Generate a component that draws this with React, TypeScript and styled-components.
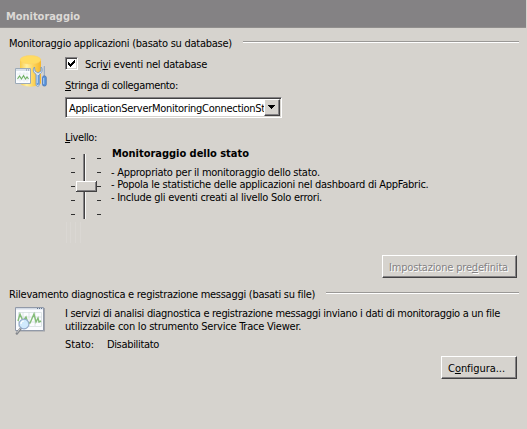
import React from 'react';
import styled, { createGlobalStyle, css } from 'styled-components';

const face = '#d6d3ce';
const shadow = '#848284';

const GlobalStyle = createGlobalStyle`
  html, body { margin: 0; padding: 0; background: ${face}; overflow: hidden; }
`;

const Panel = styled.main`
  box-sizing: border-box;
  width: 527px;
  height: 429px;
  background: ${face};
  color: #000;
  font: 11px/13px 'DejaVu Sans Condensed', 'DejaVu Sans', sans-serif;
  white-space: nowrap;
`;

const TitleBar = styled.header`
  box-sizing: border-box;
  width: 526px;
  height: 28px;
  padding: 10px 0 0 6px;
  background: ${shadow};
  border-bottom: 1px solid #918f8e;
  color: #dcd9d6;
`;

const Label = styled.span<{ $track?: number; $bold?: boolean }>`
  display: block;
  height: 13px;
  letter-spacing: ${p => p.$track ?? -0.26}px;
  font-weight: ${p => (p.$bold ? 700 : 400)};
`;

const Key = styled.span`
  text-decoration: underline;
  text-decoration-thickness: 1px;
  text-underline-offset: 1px;
  text-decoration-skip-ink: none;
`;

const Group = styled.section<{ $height: number }>`
  box-sizing: border-box;
  height: ${p => p.$height}px;
  padding: 9px 8px 0 9px;
`;

const Legend = styled.div<{ $gap: number }>`
  display: flex;
  gap: ${p => p.$gap}px;
  height: 13px;
`;

const Rule = styled.hr`
  flex: 1;
  height: 1px;
  margin: 4px 0 0;
  border: 0;
  background: #9a9896;
  border-bottom: 1px solid #fff;
`;

const Body = styled.div<{ $top: number }>`
  display: grid;
  grid-template-columns: 50px 1fr;
  padding: ${p => p.$top}px 0 0 6px;
`;

const Content = styled.div<{ $top: number }>`
  padding-top: ${p => p.$top}px;
`;

const CheckRow = styled.label`
  display: flex;
  gap: 7px;
  height: 22px;
`;

const CheckBox = styled.span`
  box-sizing: border-box;
  width: 13px;
  height: 13px;
  background: #fff;
  border: 1px solid;
  border-color: ${shadow} #fff #fff ${shadow};
  box-shadow: inset 1px 1px #424142, inset -1px -1px ${face};
  svg { display: block; }
`;

const CheckText = styled.span`
  padding-top: 1px;
`;

const Combo = styled.div`
  box-sizing: border-box;
  display: flex;
  width: 217px;
  height: 21px;
  margin-top: 5px;
  border: 1px solid;
  border-color: ${shadow} #fff #fff ${shadow};
  background: #fff;
  box-shadow: inset 1px 1px #424142, inset -1px -1px ${face};
`;

const ComboValue = styled.div`
  flex: 1;
  min-width: 0;
  overflow: hidden;
  padding: 4px 0 0 3px;
`;

const raised = css`
  border: 1px solid;
  border-color: #fff #424142 #424142 #fff;
  box-shadow: inset -1px -1px ${shadow};
  background: ${face};
`;

const Drop = styled.div`
  box-sizing: border-box;
  ${raised}
  width: 16px;
  height: 17px;
  margin: 1px 1px 0 0;
  svg { display: block; margin: 5px 0 0 3px; }
`;

const LevelRow = styled.div`
  display: flex;
  height: 101px;
  padding-top: 3px;
`;

const LevelSlider = styled.div`
  width: 46px;
  height: 96px;
  padding-top: 3px;
`;

const LevelInfo = styled.div`
  width: 400px;
`;

const LevelTitle = styled.div`
  padding: 0 0 6px 1px;
`;

const LevelLine = styled.div<{ $extra?: number }>`
  height: ${p => 12 + (p.$extra ?? 0)}px;
`;

const Actions = styled.div<{ $top: number }>`
  display: flex;
  justify-content: flex-end;
  padding: ${p => p.$top}px 2px 0 0;
`;

const Button = styled.button<{ $width: number }>`
  box-sizing: border-box;
  ${raised}
  width: ${p => p.$width}px;
  height: 23px;
  padding: 1px 0 0 6px;
  font: inherit;
  text-align: left;
  color: #000;
  &:disabled { color: ${shadow}; text-shadow: 1px 1px #fff; }
`;

const Status = styled.div`
  display: flex;
  gap: 13px;
  padding-top: 5px;
`;

const DatabaseIcon = () => (
  <svg width="33" height="34" viewBox="0 0 33 34">
    <defs>
      <linearGradient id="gold" x1="0" x2="1">
        <stop offset="0" stopColor="#f8cb48" />
        <stop offset=".32" stopColor="#fff0a0" />
        <stop offset=".65" stopColor="#fdd35a" />
        <stop offset="1" stopColor="#f5b62c" />
      </linearGradient>
    </defs>
    <path d="M5 4.5v23c0 5.5 21 5.5 21 0v-23z" fill="url(#gold)" />
    <ellipse cx="15.5" cy="4.8" rx="10.3" ry="4.2" fill="#ffdc62" stroke="#fbd268" strokeWidth=".6" />
    <path d="M.5 13.5h15v15H.5z" fill="#fafcff" stroke="#9caab8" />
    <path d="M1 14h14v2H1z" fill="#d9e1ea" />
    <path d="M11 15h3" stroke="#7588a0" strokeDasharray="1 1" />
    <path d="M2 19h12M2 22h12M2 25h12M5 17v10M9 17v10M12 17v10" stroke="#e0e8eb" strokeWidth=".6" />
    <path d="m2.5 24 2-3 2 3 2-3.5 2 3.5 1.5-2 1.5 2" fill="none" stroke="#70b264" strokeWidth="1.1" />
    <path d="M19.5 12c-2 2-1.5 6 1.5 7v10c0 3 3.5 3 3.5 0V19c3-1 3.5-5 1.5-7v4l-3 2-3-2z" fill="#dbe8f6" stroke="#7095c4" strokeWidth=".8" />
    <path d="M21.5 20v8.5c0 2 2.5 2 2.5 0V20z" fill="#659bdc" />
    <path d="M22.3 20v8" stroke="#d4e9ff" strokeWidth=".8" />
    <path d="M29.2 11v10" stroke="#8b9fb8" strokeWidth="1.5" />
    <path d="M28.8 10.5v10" stroke="#e0e8f0" strokeWidth=".6" />
    <rect x="27.5" y="21" width="3.8" height="10" rx="1.6" fill="#5994dc" stroke="#456fae" strokeWidth=".7" />
    <path d="M28.7 23v6" stroke="#c0deff" strokeWidth=".8" />
  </svg>
);

const TraceIcon = () => (
  <svg width="32" height="31" viewBox="0 0 32 31">
    <path d="M1 2h29v23.5H1z" fill="#a2a3a8" />
    <path d="M.5 1.5h28v23H.5z" fill="#fbfcff" stroke="#9199a8" />
    <path d="M1 2h27v1.5H1z" fill="#d2dae5" />
    <path d="M22 2.5h6" stroke="#637892" strokeDasharray="1 1" />
    <path d="M3.5 6.5h23v14h-23zM3 11h24M3 16h24M8 6v14M14 6v14M20 6v14" fill="none" stroke="#d5dedf" strokeWidth=".8" />
    <path d="m3 15 2-7 3 7 3-4 2 6 2 0 4-9 2 8 2-4 1 4 2-1" fill="none" stroke="#85bd79" strokeWidth="1.4" />
    <path d="m5.8 22.2-4 5.3" stroke="#83868b" strokeWidth="2.4" strokeLinecap="round" />
    <path d="m5.4 22.2-3.5 4.6" stroke="#ddd" strokeWidth=".8" />
    <circle cx="9" cy="18" r="4.9" fill="#cfe9fd" fillOpacity=".95" stroke="#93aac9" strokeWidth="1.1" />
    <path d="M6 18c0-2 1-3 3-3" fill="none" stroke="#fff" strokeWidth="1.2" />
  </svg>
);

const Slider = () => (
  <svg width="46" height="93" viewBox="0 0 46 93" shapeRendering="crispEdges">
    {[8, 22, 36, 50, 64].map(y => (
      <path key={y} d={`M6 ${y}.5h4M32 ${y}.5h4`} stroke="#303030" />
    ))}
    <path d="M18.5 4v65" stroke={shadow} />
    <path d="M19.5 4v65" stroke="#424142" />
    <path d="M20.5 4v65" stroke="#f7f6f5" />
    <path d="M11 31h21v11H11z" fill="#424142" />
    <path d="M11 31h20v10H11z" fill="#fff" />
    <path d="M12 32h19v9H12z" fill={shadow} />
    <path d="M12 32h18v8H12z" fill={face} />
    <path d="M1.5 72v21M5.5 72v21M10.5 72v21M15.5 72v21" stroke="#dad7d3" />
  </svg>
);

export default function App() {
  return (
    <>
      <GlobalStyle />
      <Panel>
        <TitleBar><Label $bold $track={-0.04}>Monitoraggio</Label></TitleBar>

        <Group $height={251}>
          <Legend $gap={11}>
            <Label>Monitoraggio applicazioni (basato su database)</Label>
            <Rule />
          </Legend>
          <Body $top={5}>
            <DatabaseIcon />
            <Content $top={2}>
              <CheckRow>
                <CheckBox>
                  <svg width="11" height="11" viewBox="0 0 11 11" shapeRendering="crispEdges">
                    <path d="M2 4v3l2 2 5-5V1L4 6z" fill="#000" />
                  </svg>
                </CheckBox>
                <CheckText><Label $track={-0.25}>Scri<Key>v</Key>i eventi nel database</Label></CheckText>
              </CheckRow>
              <Label $track={-0.36}><Key>S</Key>tringa di collegamento:</Label>
              <Combo>
                <ComboValue><Label $track={-0.28}>ApplicationServerMonitoringConnectionSt</Label></ComboValue>
                <Drop>
                  <svg width="7" height="4" viewBox="0 0 7 4" shapeRendering="crispEdges">
                    <path d="M0 0h7v1H0zM1 1h5v1H1zM2 2h3v1H2zM3 3h1v1H3z" />
                  </svg>
                </Drop>
              </Combo>
              <Content $top={13}>
                <Label $track={-0.39}><Key>L</Key>ivello:</Label>
              </Content>
              <LevelRow>
                <LevelSlider><Slider /></LevelSlider>
                <LevelInfo>
                  <LevelTitle><Label $bold $track={-0.03}>Monitoraggio dello stato</Label></LevelTitle>
                  <LevelLine><Label>- Appropriato per il monitoraggio dello stato.</Label></LevelLine>
                  <LevelLine $extra={1}><Label>- Popola le statistiche delle applicazioni nel dashboard di AppFabric.</Label></LevelLine>
                  <LevelLine><Label>- Include gli eventi creati al livello Solo errori.</Label></LevelLine>
                </LevelInfo>
              </LevelRow>
            </Content>
          </Body>
          <Actions $top={7}>
            <Button $width={135} disabled>
              <Label $track={-0.18}>Impostazione pre<Key>d</Key>efinita</Label>
            </Button>
          </Actions>
        </Group>

        <Group $height={150}>
          <Legend $gap={11}>
            <Label $track={-0.27}>Rilevamento diagnostica e registrazione messaggi (basati su file)</Label>
            <Rule />
          </Legend>
          <Body $top={5}>
            <TraceIcon />
            <Content $top={1}>
              <Label $track={-0.3}>I servizi di analisi diagnostica e registrazione messaggi inviano i dati di monitoraggio a un file</Label>
              <Label $track={-0.23}>utilizzabile con lo strumento Service Trace Viewer.</Label>
              <Status>
                <Label $track={-0.1}>Stato:</Label>
                <Label $track={-0.33}>Disabilitato</Label>
              </Status>
            </Content>
          </Body>
          <Actions $top={5}>
            <Button $width={76}>
              <Label $track={-0.05}>C<Key>o</Key>nfigura...</Label>
            </Button>
          </Actions>
        </Group>
      </Panel>
    </>
  );
}
